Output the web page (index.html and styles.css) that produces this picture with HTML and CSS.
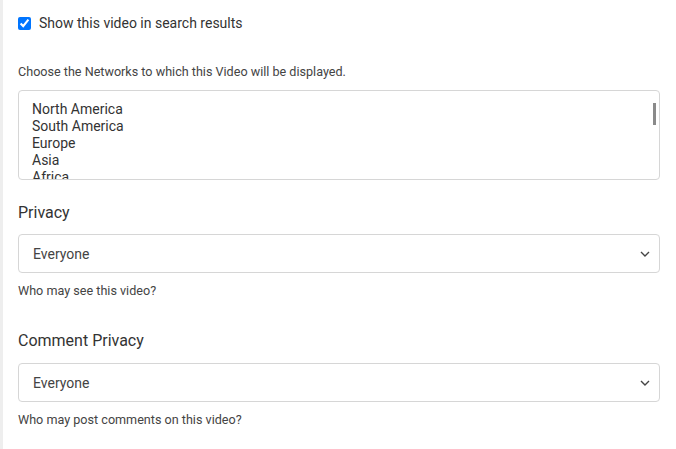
FILE: index.html
```
<!DOCTYPE html>
<html lang="en">
    <head>
        <meta charset="UTF-8" />
        <meta name="viewport" content="width=device-width, initial-scale=1.0" />
        <title>Video settings</title>
        <link rel="stylesheet" href="styles.css">
    </head>

    <body>
        <main class="page">
            <label class="check-row">
                <input type="checkbox" checked />
                <span>Show this video in search results</span>
            </label>

            <p class="hint networks-hint">Choose the Networks to which this Video will be displayed.</p>
            <div class="listbox">
                <div class="option">North America</div>
                <div class="option">South America</div>
                <div class="option">Europe</div>
                <div class="option">Asia</div>
                <div class="option">Africa</div>
                <span class="thumb"></span>
            </div>

            <h2 class="field-title">Privacy</h2>
            <div class="select">
                <span>Everyone</span>
                <svg width="10" height="6" viewBox="0 0 10 6"><path d="M1 1l4 4 4-4" fill="none" stroke="#444" stroke-width="1.4"/></svg>
            </div>
            <p class="hint">Who may see this video?</p>

            <h2 class="field-title">Comment Privacy</h2>
            <div class="select">
                <span>Everyone</span>
                <svg width="10" height="6" viewBox="0 0 10 6"><path d="M1 1l4 4 4-4" fill="none" stroke="#444" stroke-width="1.4"/></svg>
            </div>
            <p class="hint">Who may post comments on this video?</p>
        </main>
    </body>
</html>
```

FILE: styles.css
```
* {
    margin: 0;
    padding: 0;
    box-sizing: border-box;
}

html {
    font-family: Roboto, "Liberation Sans", Arial, sans-serif;
}

body {
    background: #fff;
    color: #333;
}

.page {
    min-height: 100vh;
    border-left: 3px solid #eeeeee;
    padding: 14px 16px 0 15px;
}

.check-row {
    display: flex;
    align-items: center;
    gap: 8px;
    height: 18px;
    font-size: 14px;
    color: #333;
}

.check-row input {
    margin: 0;
    width: 13px;
    height: 13px;
}

.hint {
    font-size: 12.6px;
    line-height: 15px;
    color: #444;
    margin-top: 10px;
}

.networks-hint {
    margin-top: 32px;
}

.listbox {
    position: relative;
    height: 90px;
    margin-top: 11px;
    padding: 10px 13px 0;
    border: 1px solid #d6d6d6;
    border-radius: 4px;
    overflow: hidden;
    font-size: 14px;
    line-height: 17px;
    color: #333;
}

.thumb {
    position: absolute;
    right: 3px;
    top: 12px;
    width: 3px;
    height: 22px;
    background: #8a8a8a;
}

.field-title {
    margin-top: 23px;
    font-size: 16px;
    font-weight: 400;
    line-height: 20px;
    color: #333;
}

.hint + .field-title {
    margin-top: 33px;
}

.select {
    display: flex;
    align-items: center;
    justify-content: space-between;
    height: 39px;
    margin-top: 11px;
    padding: 0 9px 0 14px;
    border: 1px solid #d6d6d6;
    border-radius: 4px;
    font-size: 14px;
    color: #444;
}

.hint + .field-title + .select {
    margin-top: 12px;
}

.select + .hint {
    margin-top: 10px;
}
```
